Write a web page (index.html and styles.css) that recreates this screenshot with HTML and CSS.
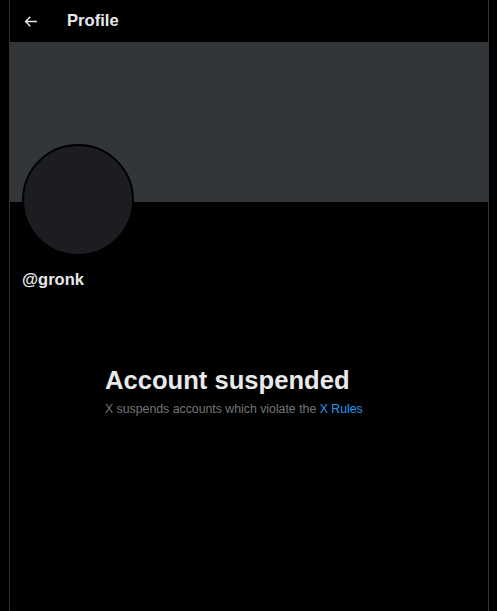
FILE: index.html
```html
<!DOCTYPE html>
<html>
<head>
<meta charset="utf-8">
<link rel="stylesheet" href="styles.css">
</head>
<body>
<main class="column">
  <header class="topbar">
    <button class="back" aria-label="Back">
      <svg viewBox="0 0 24 24" width="17" height="17"><path fill="#e7e9ea" d="M7.414 13l5.043 5.04-1.414 1.42L3.586 12l7.457-7.46 1.414 1.42L7.414 11H21v2H7.414z"/></svg>
    </button>
    <h1 class="title">Profile</h1>
  </header>
  <div class="banner"></div>
  <div class="profile">
    <div class="avatar"></div>
    <div class="handle">@gronk</div>
  </div>
  <section class="empty">
    <h2 class="empty-title">Account suspended</h2>
    <p class="empty-text">X suspends accounts which violate the <a href="#" class="link">X Rules</a></p>
  </section>
</main>
</body>
</html>
```

FILE: styles.css
```css
html, body {
  margin: 0;
  padding: 0;
  background: #000;
  height: 100%;
}
body {
  font-family: "Liberation Sans", Arial, sans-serif;
  color: #e7e9ea;
  overflow: hidden;
}
.column {
  margin-left: 9px;
  width: 478px;
  min-height: 611px;
  border-left: 1px solid #2f3336;
  border-right: 1px solid #2f3336;
  box-sizing: content-box;
}
.topbar {
  height: 42px;
  display: flex;
  align-items: center;
  padding-left: 12px;
}
.back {
  background: none;
  border: 0;
  padding: 0;
  width: 17px;
  height: 17px;
  display: flex;
  margin-right: 28px;
}
.title {
  margin: 0;
  font-size: 16.6px;
  font-weight: 700;
  color: #e7e9ea;
  padding-bottom: 0;
}
.banner {
  height: 160px;
  background: #333639;
}
.profile {
  padding-left: 12px;
}
.avatar {
  width: 108px;
  height: 108px;
  border-radius: 50%;
  background: #1b1d20;
  border: 2px solid #000;
  margin-top: -58px;
}
.handle {
  margin-top: 13px;
  font-size: 16.5px;
  font-weight: 700;
  line-height: 20px;
}
.empty {
  width: 288px;
  margin: 76px auto 0;
}
.empty-title {
  margin: 0;
  font-size: 25.6px;
  line-height: 30px;
  font-weight: 700;
  color: #e7e9ea;
}
.empty-text {
  margin: 6px 0 0;
  font-size: 12.3px;
  line-height: 16px;
  color: #71767b;
}
.link {
  color: #1d9bf0;
  text-decoration: none;
}
```
